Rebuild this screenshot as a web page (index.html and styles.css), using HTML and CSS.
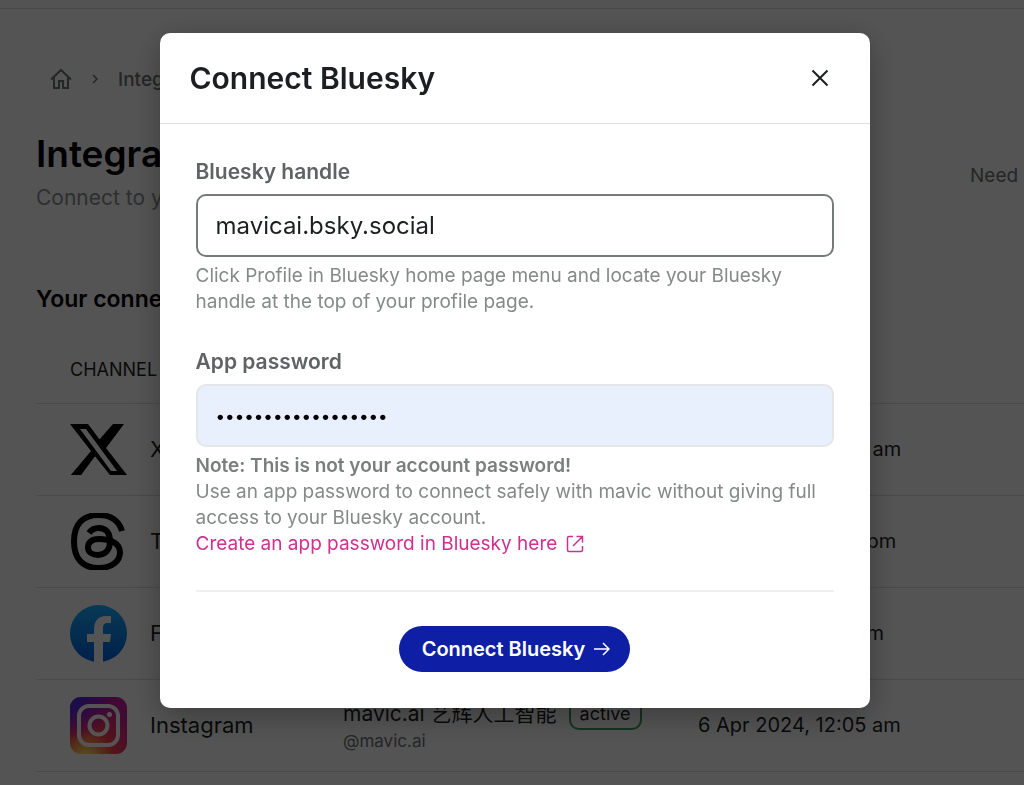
FILE: index.html
```html
<!DOCTYPE html>
<html lang="en">
<head>
<meta charset="utf-8">
<meta name="viewport" content="width=device-width, initial-scale=1">
<title>Connect Bluesky</title>
<link rel="stylesheet" href="styles.css">
</head>
<body>
<div class="page">
  <div class="topbar"></div>
  <main class="content">
    <nav class="crumbs" aria-label="Breadcrumb">
      <a href="#" class="crumb-home" aria-label="Home"><svg width="22" height="22" viewBox="0 0 22 22" fill="none" stroke="currentColor" stroke-width="2"><path d="M1 11.500 11 2l10 9.500M4 9v11h5v-7h4v7h5V9"/></svg></a>
      <svg width="8" height="12" viewBox="0 0 8 12" fill="none" stroke="currentColor" stroke-width="1.500"><path d="m2 2 4 4-4 4"/></svg>
      <a href="#" class="crumb">Integrations</a>
    </nav>
    <header class="heading">
      <div>
        <h1>Integrations</h1>
        <p class="lead">Connect to your channels</p>
      </div>
      <a href="#" class="need">Need help?</a>
    </header>
    <h2>Your connections</h2>
    <table class="channels">
      <thead>
        <tr><th class="c-channel">CHANNEL</th><th class="c-account"></th><th class="c-date"></th></tr>
      </thead>
      <tbody>
        <tr>
          <td><div class="channel"><svg width="57" height="57" viewBox="0 0 57 57"><path fill="#000" fill-rule="evenodd" d="M0 3h18l15 20L44 3h10L36 27l21 27H40L24 34 11 54H1l20-24zM10 8l31 42h6L16 8z"/><path d="M43 3h10L34 25l-5-6zM26 34 11 54H1l21-24z"/></svg><span>X</span></div></td>
          <td></td><td class="date">8 Apr 2024, 10:05 am</td>
        </tr>
        <tr>
          <td><div class="channel"><svg width="57" height="57" viewBox="0 0 57 57" fill="none" stroke="#000" stroke-width="6"><path d="M52 18C49 8 41 2 29 2 12 2 4 12 4 28.500S12 55 29 55c13 0 21-7 21-15.500C50 30 40 26 29 26c-8 0-11 4-11 8.500 0 5 5 7.500 10 7.500 8 0 12-6 12-14 0-8-4-13-11-13-5 0-8 2-10 5"/></svg><span>Threads</span></div></td>
          <td></td><td class="date">7 Apr 2024, 11:25 pm</td>
        </tr>
        <tr>
          <td><div class="channel"><svg width="57" height="57" viewBox="0 0 57 57"><defs><linearGradient id="fb" x1="0" y1="0" x2="0" y2="1"><stop offset="0" stop-color="#19afff"/><stop offset="1" stop-color="#0062e0"/></linearGradient></defs><circle cx="28.500" cy="28.500" r="28.500" fill="url(#fb)"/><path fill="#fff" d="M24 57V37h-7v-8h7v-4c0-9 4-14 12-14h5v7h-3c-4 0-5 2-5 5v6h8l-1 8h-7v20z"/></svg><span>Facebook</span></div></td>
          <td></td><td class="date">1 Apr 2024, 9:15 am</td>
        </tr>
        <tr>
          <td><div class="channel"><svg width="57" height="57" viewBox="0 0 57 57"><defs><radialGradient id="ig" cx=".27" cy="1.080" r="1"><stop offset="0" stop-color="#ffdd55"/><stop offset=".1" stop-color="#ffdd55"/><stop offset=".5" stop-color="#ff3e4a"/><stop offset="1" stop-color="#c41fa0"/></radialGradient><radialGradient id="ig2" cx="-.1" cy="-.1" r=".9"><stop offset="0" stop-color="#3751d8"/><stop offset=".3" stop-color="#4a30e0"/><stop offset="1" stop-color="#6600ff" stop-opacity="0"/></radialGradient></defs><rect width="57" height="57" rx="11" fill="url(#ig)"/><rect width="57" height="57" rx="11" fill="url(#ig2)"/><g fill="none" stroke="#fff" stroke-width="4"><rect x="9" y="9" width="39" height="39" rx="10"/><circle cx="28.500" cy="28.500" r="9"/></g><circle cx="39.500" cy="17.500" r="2.500" fill="#fff"/></svg><span>Instagram</span></div></td>
          <td><div class="account"><div class="account-name">mavic.ai 艺辉人工智能 <span class="badge">active</span></div><div class="handle">@mavic.ai</div></div></td>
          <td class="date">6 Apr 2024, 12:05 am</td>
        </tr>
      </tbody>
    </table>
  </main>
</div>
<div class="overlay">
  <section class="modal" role="dialog" aria-modal="true" aria-labelledby="title">
    <header class="modal-head">
      <h2 id="title">Connect Bluesky</h2>
      <button type="button" class="close" aria-label="Close"><svg width="18" height="18" viewBox="0 0 18 18" fill="none" stroke="currentColor" stroke-width="2"><path d="m1.500 1.500 15 15m0-15-15 15"/></svg></button>
    </header>
    <form class="modal-body">
      <div class="field">
        <label for="handle">Bluesky handle</label>
        <input id="handle" class="input input-active" type="text" value="mavicai.bsky.social">
        <p class="hint">Click Profile in Bluesky home page menu and locate your Bluesky handle at the top of your profile page.</p>
      </div>
      <div class="field">
        <label for="password">App password</label>
        <input id="password" class="input input-filled" type="password" value="abcdefghijklmnopqr">
        <p class="hint"><strong>Note: This is not your account password!</strong><br>Use an app password to connect safely with mavic without giving full access to your Bluesky account.<br><a href="#" class="link">Create an app password in Bluesky here<svg width="18" height="18" viewBox="0 0 18 18" fill="none" stroke="currentColor" stroke-width="1.500"><path d="M7 1.500H3Q1.500 1.500 1.500 3v12q0 1.500 1.500 1.500h12q1.500 0 1.500-1.500v-4M10.500 1.500h6v6M16.500 1.500 7 11"/></svg></a></p>
      </div>
      <div class="actions">
        <button type="submit" class="submit">Connect Bluesky<svg width="16" height="14" viewBox="0 0 16 14" fill="none" stroke="currentColor" stroke-width="1.500"><path d="M0 7h15M9 1l6 6-6 6"/></svg></button>
      </div>
    </form>
  </section>
</div>
</body>
</html>
```
FILE: styles.css
```css
* { box-sizing: border-box; }
body {
  margin: 0;
  font-family: Inter, "Noto Sans CJK SC", sans-serif;
  font-size: 19px;
  color: #1c1f1f;
  background: #fff;
}
h1, h2, p { margin: 0; }
a { color: inherit; text-decoration: none; }
svg { display: block; flex: none; }

.page { height: 100vh; overflow: hidden; }
.topbar { height: 9px; background: #fafaff; border-bottom: 1px solid #dcdce4; }
.content { padding: 56px 0 0 36px; }
.crumbs {
  display: flex;
  align-items: center;
  gap: 19px;
  height: 28px;
  padding-left: 14px;
  color: #707373;
}
.crumb { font-size: 19px; font-weight: 500; }
.heading {
  display: flex;
  justify-content: space-between;
  align-items: center;
  height: 96px;
  margin-top: 29px;
}
h1 { font-size: 37px; line-height: 56px; font-weight: 600; color: #000; }
.lead { font-size: 21px; line-height: 32px; color: #8b8e8e; }
.need {
  flex: none;
  width: 54px;
  padding-top: 10px;
  overflow: hidden;
  white-space: nowrap;
  font-size: 19px;
  color: #707373;
}
.content h2 { margin-top: 65px; font-size: 23px; line-height: 32px; font-weight: 600; color: #000; }

.channels { width: 100%; margin-top: 20px; border-collapse: collapse; table-layout: fixed; }
.channels th { height: 68px; padding: 2px 0 0 34px; font-size: 18px; font-weight: 400; text-align: left; }
.channels td { height: 92px; padding: 0; border-top: 1px solid #dcdfdf; }
.channels tr:last-child td { border-bottom: 1px solid #dcdfdf; }
.c-channel { width: 307px; }
.c-account { width: 355px; }
.channel { display: flex; align-items: center; gap: 23px; padding-left: 34px; font-size: 22px; }
.account-name { display: flex; align-items: center; gap: 12px; line-height: 32px; font-size: 21px; white-space: nowrap; }
.badge {
  padding: 0 9px;
  border: 2px solid #3f9a62;
  border-radius: 10px;
  font-size: 18px;
  line-height: 28px;
}
.handle { font-size: 17px; line-height: 22px; color: #707373; }
.date { font-size: 20px; }

.overlay {
  position: fixed;
  inset: 0;
  display: flex;
  justify-content: center;
  align-items: flex-start;
  padding: 33px 0 0 5px;
  background: rgba(0, 0, 0, .67);
}
.modal {
  width: 710px;
  max-width: 100%;
  border-radius: 10px;
  background: #fff;
  box-shadow: 0 8px 32px rgba(0, 0, 0, .3);
}
.modal-head {
  display: flex;
  justify-content: space-between;
  align-items: center;
  height: 91px;
  padding: 0 41px 0 30px;
  border-bottom: 1px solid #dfe1e1;
}
.modal-head h2 { font-size: 30px; line-height: 40px; font-weight: 600; }
.close { padding: 0; border: 0; background: none; color: #1c1f1f; }
.modal-body { padding: 34px 36px 36px; }
.field { display: flex; flex-direction: column; margin-bottom: 33px; }
.field label { font-size: 21px; line-height: 28px; margin-bottom: 8px; font-weight: 600; color: #5f6363; }
.input {
  width: 100%;
  height: 63px;
  padding: 0 18px;
  border: 2px solid #e4e6e8;
  border-radius: 10px;
  outline: 0;
  background: #fff;
  color: #1c1f1f;
  font-family: inherit;
  font-size: 24px;
}
.input-active { border-color: #747b79; }
.input-filled { background: #e8f0fe; color: #000; font-size: 17px; }
.hint { margin-top: 6px; font-size: 19px; line-height: 26px; color: #858a89; }
.hint strong { font-weight: 600; color: #7a7f7e; }
.link { display: inline-flex; align-items: center; gap: 9px; color: #d0308f; }
.actions {
  display: flex;
  justify-content: center;
  padding-top: 34px;
  border-top: 2px solid #eff0f0;
}
.submit {
  display: flex;
  align-items: center;
  gap: 9px;
  height: 46px;
  padding: 0 20px 0 23px;
  border: 0;
  border-radius: 24px;
  background: #0f1fa5;
  color: #fff;
  font-family: inherit;
  font-size: 20px;
  font-weight: 600;
}
```
